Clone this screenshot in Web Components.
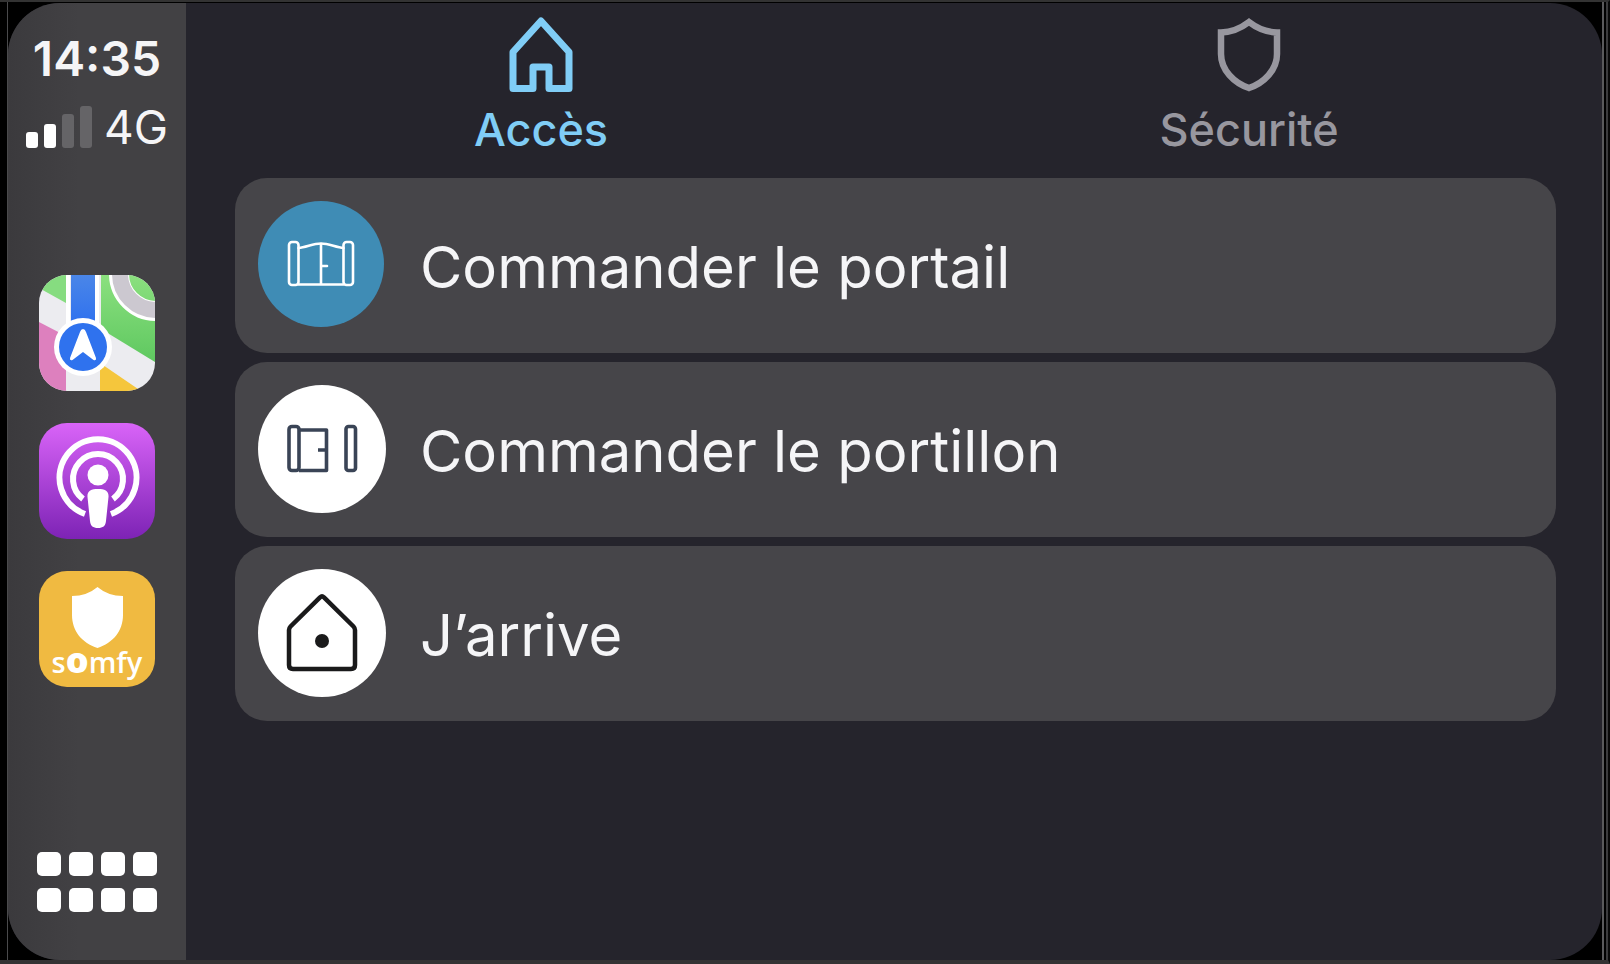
<!DOCTYPE html>
<html lang="fr">
<head>
<meta charset="utf-8">
<meta name="viewport" content="width=device-width, initial-scale=1">
<title>Somfy CarPlay</title>
<style>
  body {
    margin: 0;
    background: #000;
    color: #f5f5f7;
    font-family: Inter, 'Liberation Sans', sans-serif;
  }
</style>
</head>
<body>
<car-screen>
  <car-dock slot="dock" time="14:35" network="4G" bars="2">
    <dock-app name="Plans" icon="maps"></dock-app>
    <dock-app name="Podcasts" icon="podcasts"></dock-app>
    <dock-app name="Somfy" icon="somfy"></dock-app>
  </car-dock>
  <tab-bar>
    <tab-item icon="home" active>Accès</tab-item>
    <tab-item icon="shield">Sécurité</tab-item>
  </tab-bar>
  <action-list>
    <action-row icon="gate" active>Commander le portail</action-row>
    <action-row icon="door">Commander le portillon</action-row>
    <action-row icon="arrive">J’arrive</action-row>
  </action-list>
</car-screen>

<script>
const icons = {
  home: `
    <svg width="66" height="78" viewBox="0 0 66 78" fill="none" stroke="currentColor" stroke-width="7" stroke-linejoin="round">
      <path d="M33 6 L61 37 V73.500 H41 V52 H25 V73.500 H5 V37 Z"/>
    </svg>`,
  shield: `
    <svg width="66" height="78" viewBox="0 0 66 78" fill="none" stroke="currentColor" stroke-width="6.500">
      <path d="M33 7 Q20 17 5 17.500 V39 C5 55 18 68 33 73 C48 68 61 55 61 39 V17.500 Q46 17 33 7 Z"/>
    </svg>`,
  gate: `
    <svg width="70" height="50" viewBox="0 0 70 50" fill="none" stroke="#fff" stroke-width="2.600" stroke-linejoin="round" stroke-linecap="round">
      <rect x="3" y="3" width="9.500" height="43" rx="3"/>
      <rect x="57.500" y="3" width="9.500" height="43" rx="3"/>
      <path d="M12.500 9 C20 8.500 27 4.500 35 4.500 C43 4.500 50 8.500 57.500 9"/>
      <path d="M12.500 45.500 H57.500 M35 5 V45 M35 27 H41"/>
    </svg>`,
  door: `
    <svg width="72" height="50" viewBox="0 0 72 50" fill="none" stroke="#3a4456" stroke-width="3.600" stroke-linejoin="round">
      <rect x="3" y="2.500" width="10" height="44" rx="3"/>
      <path d="M13 6 H40.500 V46.500 H13 M40 26 H32"/>
      <rect x="60" y="2.500" width="9.500" height="44" rx="2.500"/>
    </svg>`,
  arrive: `
    <svg width="72" height="80" viewBox="0 0 72 80" fill="none" stroke="#1a1a1b" stroke-width="4.500" stroke-linejoin="round">
      <path d="M34 4.300 Q36 2.500 38 4.300 L67.500 33.500 Q69 35 69 37 V72 Q69 76 65 76 H7 Q3 76 3 72 V37 Q3 35 4.500 33.500 Z"/>
      <circle cx="36" cy="48" r="7" fill="#1a1a1b" stroke="none"/>
    </svg>`,
  maps: `
    <svg width="116" height="116" viewBox="0 0 116 116">
      <defs>
        <linearGradient id="green" x1="0" y1="0" x2="0" y2="1">
          <stop offset="0" stop-color="#8be07f"/>
          <stop offset="1" stop-color="#5fc860"/>
        </linearGradient>
        <linearGradient id="blue" x1="0" y1="0" x2="0" y2="1">
          <stop offset="0" stop-color="#4a86e8"/>
          <stop offset="1" stop-color="#2a6df0"/>
        </linearGradient>
      </defs>
      <rect width="116" height="116" fill="#ececf0"/>
      <path d="M0 0 H27 V28 L0 13 Z" fill="#86dc80"/>
      <path d="M62 0 H116 V87 L62 54 Z" fill="url(#green)"/>
      <circle cx="117" cy="-1" r="37" fill="none" stroke="#fff" stroke-width="20"/>
      <circle cx="117" cy="-1" r="36" fill="none" stroke="#ccc8d0" stroke-width="16"/>
      <path d="M0 47 L27 61 V116 H0 Z" fill="#dd80be"/>
      <path d="M61 88 L102 116 H61 Z" fill="#f5c63c"/>
      <path d="M29 0 V60 M58 0 V60" stroke="#fff" stroke-width="4"/>
      <rect x="32" width="24" height="60" fill="url(#blue)"/>
      <circle cx="44" cy="72" r="29" fill="#fff"/>
      <circle cx="44" cy="72" r="24" fill="#2f72ee"/>
      <path d="M44 54 Q46 54 47 57 L57 83 Q57.500 86 54.500 85 L44 77 L33.500 85 Q30.500 86 31 83 L41 57 Q42 54 44 54 Z" fill="#fff"/>
    </svg>`,
  podcasts: `
    <svg width="116" height="116" viewBox="0 0 116 116">
      <defs>
        <linearGradient id="purple" x1="0" y1="0" x2="0" y2="1">
          <stop offset="0" stop-color="#d964f8"/>
          <stop offset="1" stop-color="#7d23b5"/>
        </linearGradient>
      </defs>
      <rect width="116" height="116" fill="url(#purple)"/>
      <g fill="none" stroke="#fff" stroke-width="6">
        <path d="M46 91 A38.500 38.500 0 1 1 72 91"/>
        <path d="M44 76 A25 25 0 1 1 74 76"/>
      </g>
      <circle cx="59" cy="52" r="10.500" fill="#fff"/>
      <path d="M59 66 C66 66 70 68 69.500 74 L67 98 C66.500 103 64 105 59 105 C54 105 51.500 103 51 98 L48.500 74 C48 68 52 66 59 66 Z" fill="#fff"/>
    </svg>`,
  somfy: `
    <svg width="116" height="116" viewBox="0 0 116 116">
      <rect width="116" height="116" fill="#f0ba41"/>
      <path d="M58.500 16 Q69 25 84 25 V44 C84 60 74 72 58.500 77 C43 72 33 60 33 44 V25 Q48 25 58.500 16 Z" fill="#fff"/>
      <g fill="#fff" text-anchor="middle" font-family="'Open Sans', sans-serif" font-size="29" font-weight="600">
        <text x="58" y="102">s<tspan font-weight="800" font-size="36">o</tspan>mfy</text>
      </g>
    </svg>`
};

// resets the native look of a button inside a shadow root
const buttonReset = `
  button {
    margin: 0;
    padding: 0;
    border: 0;
    background: none;
    color: inherit;
    font: inherit;
    cursor: pointer;
  }
  svg { display: block; }
`;

class CarScreen extends HTMLElement {
  constructor() {
    super();
    this.attachShadow({ mode: 'open' }).innerHTML = `
      <style>
        :host {
          display: flex;
          box-sizing: border-box;
          min-height: 100vh;
          padding-left: 7px;
          border-top: 2px solid #333;
          border-bottom: 4px solid #343334;
          border-right: 2px solid #0a0a0a;
          background: #000;
        }
        .bezel {
          flex: 1;
          display: flex;
          border-left: 1px solid #4a4a4c;
          border-right: 2px solid #5a5a5c;
          padding-top: 1px;
          margin-right: 2px;
        }
        .glass {
          flex: 1;
          display: flex;
          border-radius: 52px;
          overflow: hidden;
          background: #25242c;
        }
        .edge { width: 2px; background: #3c3c3e; }
        main { flex: 1; min-width: 0; }
      </style>
      <div class="bezel">
        <div class="glass">
          <slot name="dock"></slot>
          <main><slot></slot></main>
        </div>
      </div>
      <div class="edge"></div>
    `;
  }
}

class CarDock extends HTMLElement {
  constructor() {
    super();
    this.attachShadow({ mode: 'open' });
  }

  connectedCallback() {
    const bars = parseInt(this.getAttribute('bars') || '0');
    const heights = [16, 24, 34, 42];

    this.shadowRoot.innerHTML = `
      <style>
        ${buttonReset}
        :host {
          display: flex;
          flex-direction: column;
          align-items: center;
          box-sizing: border-box;
          width: 178px;
          padding: 28px 0 48px;
          background: linear-gradient(90deg, #3b3a3d, #424144 40%);
        }
        .time {
          font-size: 48px;
          font-weight: 600;
          line-height: 56px;
        }
        .network {
          display: flex;
          align-items: flex-end;
          gap: 12px;
          margin-top: 16px;
          font-size: 46px;
          line-height: 48px;
        }
        .bars {
          display: flex;
          align-items: flex-end;
          gap: 6px;
          padding-bottom: 3px;
        }
        .bars i {
          width: 12px;
          border-radius: 3px;
          background: #656467;
        }
        .bars i.on { background: #fff; }
        .apps {
          display: flex;
          flex-direction: column;
          gap: 32px;
          margin-top: 124px;
        }
        .grid {
          display: grid;
          grid-template-columns: repeat(4, 24px);
          grid-auto-rows: 24px;
          gap: 12px 8px;
          margin-top: auto;
        }
        .grid i {
          border-radius: 5px;
          background: #fff;
        }
      </style>
      <div class="time">${this.getAttribute('time')}</div>
      <div class="network">
        <div class="bars">
          ${heights.map((h, i) => `<i class="${i < bars ? 'on' : ''}" style="height: ${h}px"></i>`).join('')}
        </div>
        <span>${this.getAttribute('network')}</span>
      </div>
      <div class="apps"><slot></slot></div>
      <button class="grid" type="button" aria-label="Applications">${'<i></i>'.repeat(8)}</button>
    `;
  }
}

class DockApp extends HTMLElement {
  connectedCallback() {
    this.attachShadow({ mode: 'open' }).innerHTML = `
      <style>
        ${buttonReset}
        :host { display: block; }
        button {
          display: block;
          border-radius: 28px;
          overflow: hidden;
        }
      </style>
      <button type="button" aria-label="${this.getAttribute('name')}">${icons[this.getAttribute('icon')]}</button>
    `;
  }
}

class TabBar extends HTMLElement {
  constructor() {
    super();
    this.attachShadow({ mode: 'open' }).innerHTML = `
      <style>
        :host { display: block; }
        nav {
          display: grid;
          grid-template-columns: 1fr 1fr;
        }
      </style>
      <nav><slot></slot></nav>
    `;
  }
}

class TabItem extends HTMLElement {
  connectedCallback() {
    this.attachShadow({ mode: 'open' }).innerHTML = `
      <style>
        ${buttonReset}
        :host {
          display: block;
          color: #98979f;
        }
        :host([active]) { color: #80cdf6; }
        button {
          display: flex;
          flex-direction: column;
          align-items: center;
          gap: 9px;
          width: 100%;
          padding: 12px 0 0 2px;
          font-size: 45px;
          font-weight: 500;
          line-height: 56px;
        }
      </style>
      <button type="button">
        ${icons[this.getAttribute('icon')]}
        <span><slot></slot></span>
      </button>
    `;
  }
}

class ActionList extends HTMLElement {
  constructor() {
    super();
    this.attachShadow({ mode: 'open' }).innerHTML = `
      <style>
        :host {
          display: flex;
          flex-direction: column;
          gap: 9px;
          padding: 20px 46px 0 49px;
        }
      </style>
      <slot></slot>
    `;
  }
}

class ActionRow extends HTMLElement {
  connectedCallback() {
    this.attachShadow({ mode: 'open' }).innerHTML = `
      <style>
        ${buttonReset}
        :host {
          display: block;
          --disc: #fff;
          --disc-size: 128px;
        }
        :host([active]) {
          --disc: #3f8cb5;
          --disc-size: 126px;
        }
        button {
          display: grid;
          grid-template-columns: 128px 1fr;
          gap: 34px;
          width: 100%;
          padding: 23px 23px 24px;
          border-radius: 32px;
          background: #464549;
          font-size: 58px;
          line-height: 72px;
          text-align: left;
        }
        .disc {
          display: grid;
          place-items: center;
          width: var(--disc-size);
          height: var(--disc-size);
          margin-bottom: calc(128px - var(--disc-size));
          border-radius: 50%;
          background: var(--disc);
        }
        .label {
          align-self: center;
          padding-top: 4px;
        }
      </style>
      <button type="button">
        <span class="disc">${icons[this.getAttribute('icon')]}</span>
        <span class="label"><slot></slot></span>
      </button>
    `;
  }
}

customElements.define('car-screen', CarScreen);
customElements.define('car-dock', CarDock);
customElements.define('dock-app', DockApp);
customElements.define('tab-bar', TabBar);
customElements.define('tab-item', TabItem);
customElements.define('action-list', ActionList);
customElements.define('action-row', ActionRow);
</script>
</body>
</html>
